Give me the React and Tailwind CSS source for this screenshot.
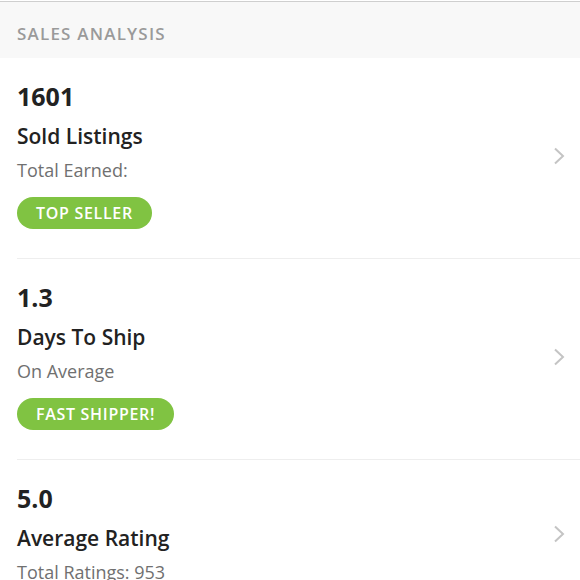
import React from 'react';

const stats = [
  { value: '1601', title: 'Sold Listings', sub: 'Total Earned:', badge: 'TOP SELLER' },
  { value: '1.3', title: 'Days To Ship', sub: 'On Average', badge: 'FAST SHIPPER!' },
  { value: '5.0', title: 'Average Rating', sub: 'Total Ratings: 953', badge: null },
];

const Chevron = () => (
  <svg width="14" height="18" viewBox="0 0 14 18" fill="none">
    <path d="M2 1.5l8 7.5-8 7.5" stroke="#c4c4c4" strokeWidth="2" />
  </svg>
);

const App = () => {
  return (
    <div className="w-[580px] h-[580px] overflow-hidden bg-white" style={{ fontFamily: '"Open Sans", "Noto Sans", sans-serif' }}>
      <div className="h-[1px] bg-white" />
      <div className="h-[1px] bg-[#cfcfcf]" />
      <div className="h-[56px] bg-[#f8f8f8] flex items-center pt-[7px] px-[17px]">
        <span className="text-[17px] font-semibold tracking-[1.2px] text-[#9a9a9a]">SALES ANALYSIS</span>
      </div>

      <div className="pl-[17px]">
        {stats.map((s, i) => (
          <div key={s.value} className={i > 0 ? 'border-t border-[#eeeeee]' : ''}>
            <div className="flex items-center pr-[13px] pt-[24px] pb-[29px]">
              <div className="flex-1 flex flex-col items-start">
                <div className="h-[30px] flex items-center text-[25px] font-bold text-[#222]">{s.value}</div>
                <div className="mt-[11px] h-[28px] flex items-center text-[21px] font-semibold text-[#222]">{s.title}</div>
                <div className="mt-[7px] h-[24px] flex items-center text-[18px] text-[#707070]">{s.sub}</div>
                {s.badge && (
                  <div className="mt-[15px] h-[32px] px-[19px] rounded-full bg-[#80c342] flex items-center text-white text-[16px] font-semibold tracking-[0.7px]">
                    {s.badge}
                  </div>
                )}
              </div>
              <Chevron />
            </div>
          </div>
        ))}
      </div>
    </div>
  );
};

export default App;
